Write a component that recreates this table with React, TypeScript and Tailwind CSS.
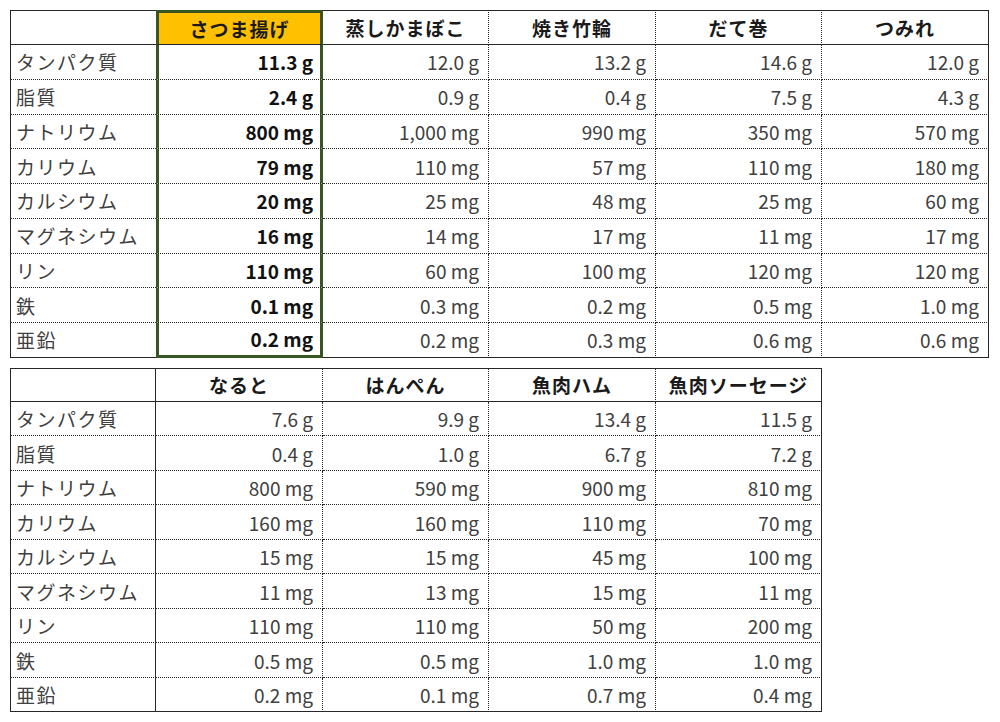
import React from 'react'
import { clsx } from 'clsx'

// 練り物の栄養成分 比較表（100gあたり）

type Item = {
  name: string
  values: string[]
  highlight?: boolean
}

const nutrients = ['タンパク質', '脂質', 'ナトリウム', 'カリウム', 'カルシウム', 'マグネシウム', 'リン', '鉄', '亜鉛']

const top: Item[] = [
  { name: 'さつま揚げ', highlight: true, values: ['11.3 g', '2.4 g', '800 mg', '79 mg', '20 mg', '16 mg', '110 mg', '0.1 mg', '0.2 mg'] },
  { name: '蒸しかまぼこ', values: ['12.0 g', '0.9 g', '1,000 mg', '110 mg', '25 mg', '14 mg', '60 mg', '0.3 mg', '0.2 mg'] },
  { name: '焼き竹輪', values: ['13.2 g', '0.4 g', '990 mg', '57 mg', '48 mg', '17 mg', '100 mg', '0.2 mg', '0.3 mg'] },
  { name: 'だて巻', values: ['14.6 g', '7.5 g', '350 mg', '110 mg', '25 mg', '11 mg', '120 mg', '0.5 mg', '0.6 mg'] },
  { name: 'つみれ', values: ['12.0 g', '4.3 g', '570 mg', '180 mg', '60 mg', '17 mg', '120 mg', '1.0 mg', '0.6 mg'] },
]

const bottom: Item[] = [
  { name: 'なると', values: ['7.6 g', '0.4 g', '800 mg', '160 mg', '15 mg', '11 mg', '110 mg', '0.5 mg', '0.2 mg'] },
  { name: 'はんぺん', values: ['9.9 g', '1.0 g', '590 mg', '160 mg', '15 mg', '13 mg', '110 mg', '0.5 mg', '0.1 mg'] },
  { name: '魚肉ハム', values: ['13.4 g', '6.7 g', '900 mg', '110 mg', '45 mg', '15 mg', '50 mg', '1.0 mg', '0.7 mg'] },
  { name: '魚肉ソーセージ', values: ['11.5 g', '7.2 g', '810 mg', '70 mg', '100 mg', '11 mg', '200 mg', '1.0 mg', '0.4 mg'] },
]

const colWidths = [167, 166, 167, 166, 167]

type Props = {
  items: Item[]
  headerClass: string
  rowClass: string
}

function NutritionTable({ items, headerClass, rowClass }: Props) {
  const width = 146 + colWidths.slice(0, items.length).reduce((a, b) => a + b, 0)
  const last = nutrients.length - 1
  const firstHighlighted = items[0]?.highlight

  return (
    <table
      className="table-fixed border-separate border-spacing-0 text-[19px] leading-none"
      style={{ width }}
    >
      <colgroup>
        <col className="w-[146px]" />
        {items.map((it, i) => (
          <col key={it.name} style={{ width: colWidths[i] }} />
        ))}
      </colgroup>
      <thead>
        <tr className={headerClass}>
          <th
            className={clsx(
              'border-t border-l border-b border-[#262626]',
              !firstHighlighted && 'border-r',
            )}
          />
          {items.map((it, c) => {
            const lastCol = c === items.length - 1
            const nextHighlighted = items[c + 1]?.highlight
            return (
              <th
                key={it.name}
                className={clsx(
                  'text-center font-bold text-[#1a1a1a] tracking-[1px] whitespace-nowrap',
                  it.highlight
                    ? 'border-x-[3px] border-t-[3px] border-b border-x-[#375623] border-t-[#375623] border-b-[#262626] bg-[#ffc000]'
                    : 'border-t border-b border-r border-[#262626]',
                  !it.highlight && nextHighlighted && 'border-r-0',
                  !it.highlight && !lastCol && '[border-right-style:dotted]',
                )}
              >
                {it.name}
              </th>
            )
          })}
        </tr>
      </thead>
      <tbody>
        {nutrients.map((n, r) => {
          const lastRow = r === last
          return (
            <tr key={n} className={rowClass}>
              <td
                className={clsx(
                  'border-l border-b border-[#262626] pl-[5px] text-left text-[#404040] tracking-[1.5px] whitespace-nowrap',
                  !firstHighlighted && 'border-r',
                  !lastRow && '[border-bottom-style:dotted]',
                )}
              >
                {n}
              </td>
              {items.map((it, c) => {
                const lastCol = c === items.length - 1
                const nextHighlighted = items[c + 1]?.highlight
                if (it.highlight) {
                  return (
                    <td
                      key={it.name}
                      className={clsx(
                        'border-x-[3px] border-x-[#375623] pr-[7px] text-right font-bold text-[#111] whitespace-nowrap',
                        lastRow
                          ? 'border-b-[3px] border-b-[#375623]'
                          : 'border-b border-b-[#262626] [border-bottom-style:dotted]',
                      )}
                    >
                      {it.values[r]}
                    </td>
                  )
                }
                return (
                  <td
                    key={it.name}
                    className={clsx(
                      'border-b border-r border-[#262626] pr-[9px] text-right text-[#404040] whitespace-nowrap',
                      nextHighlighted && 'border-r-0',
                      !lastCol && '[border-right-style:dotted]',
                      !lastRow && '[border-bottom-style:dotted]',
                    )}
                  >
                    {it.values[r]}
                  </td>
                )
              })}
            </tr>
          )
        })}
      </tbody>
    </table>
  )
}

export default function App() {
  return (
    <div
      className="flex min-h-[722px] w-[1000px] flex-col gap-[10px] bg-white p-[10px]"
      style={{ fontFamily: '"Noto Sans CJK JP", "Noto Sans", sans-serif' }}
    >
      <NutritionTable items={top} headerClass="h-[35px]" rowClass="h-[34.75px]" />
      <NutritionTable items={bottom} headerClass="h-[34px]" rowClass="h-[34.5px]" />
    </div>
  )
}
